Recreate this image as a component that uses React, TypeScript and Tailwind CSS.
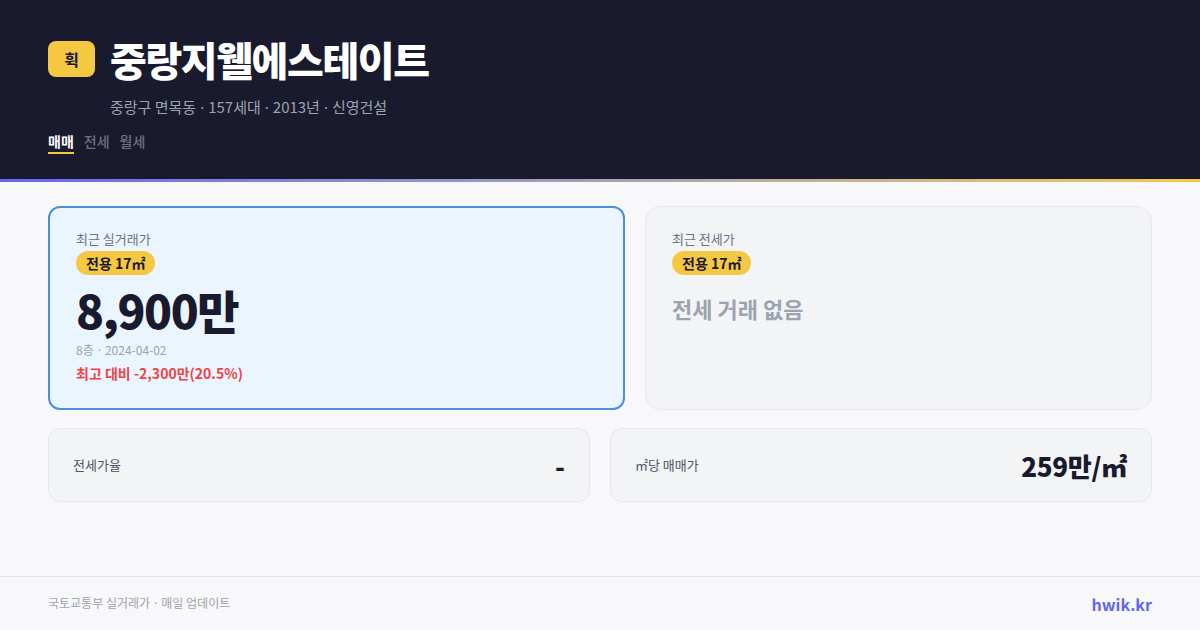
import React from "react";

const font = { fontFamily: '"Noto Sans CJK KR", "Noto Sans", sans-serif' };

function Dot() {
  return <span className="font-['Noto_Sans'] mx-[4px]">·</span>;
}

export default function App() {
  return (
    <div className="w-[1200px] h-[630px] bg-[#f8f8fa] flex flex-col overflow-hidden" style={font}>
      <header className="bg-[#1a1a2e] h-[179px] px-12 pt-[37px]">
        <div className="flex items-center gap-[15px]">
          <div className="w-[47px] h-[36px] rounded-lg bg-[#f5c842] flex items-center justify-center text-[16px] font-bold text-[#1a1a2e]">휙</div>
          <h1 className="text-[40px] leading-[44px] font-black text-white tracking-[-0.035em]">중랑지웰에스테이트</h1>
        </div>
        <div className="ml-[62px] mt-[16px] text-[15px] leading-[20px] text-[#9ca3af]">
          중랑구 면목동<Dot />157세대<Dot />2013년<Dot />신영건설
        </div>
        <div className="flex gap-[10px] mt-[15px]">
          <div className="flex flex-col items-center">
            <span className="text-[14px] leading-[18px] font-bold text-white">매매</span>
            <span className="mt-[2px] h-[2px] w-full bg-[#f5c842]" />
          </div>
          <span className="text-[14px] leading-[18px] text-[#6b7280] font-medium">전세</span>
          <span className="text-[14px] leading-[18px] text-[#6b7280] font-medium">월세</span>
        </div>
      </header>
      <div className="h-[3px] bg-gradient-to-r from-[#6366f1] to-[#f5c842]" />
      <main className="flex-1 px-12 pt-[24px]">
        <div className="flex gap-[20px] h-[204px]">
          <div className="w-[577px] rounded-[12px] border-2 border-[#4a90d9] bg-[#ebf5ff] px-[26px] pt-[22px]">
            <div className="text-[13px] leading-[18px] text-[#6b7280]">최근 실거래가</div>
            <div className="mt-[3px] inline-flex items-center h-[24px] px-[10px] rounded-full bg-[#f5c842] text-[14px] font-bold text-[#1a1a2e]">전용 17㎡</div>
            <div className="mt-[10px] text-[46px] leading-[48px] font-black text-[#1a1a2e] tracking-[-0.03em]">8,900만</div>
            <div className="mt-[9px] text-[12px] leading-[16px] text-[#9ca3af]">
              8층<Dot />2024-04-02
            </div>
            <div className="mt-[4px] text-[14px] leading-[20px] font-bold text-[#ef4444]">최고 대비 -2,300만(20.5%)</div>
          </div>
          <div className="flex-1 rounded-[16px] border border-[#e5e7eb] bg-[#f3f4f6] px-[26px] pt-[23px]">
            <div className="text-[13px] leading-[18px] text-[#6b7280]">최근 전세가</div>
            <div className="mt-[3px] inline-flex items-center h-[24px] px-[10px] rounded-full bg-[#f5c842] text-[14px] font-bold text-[#1a1a2e]">전용 17㎡</div>
            <div className="mt-[18px] text-[22px] leading-[30px] font-bold text-[#9ca3af]">전세 거래 없음</div>
          </div>
        </div>
        <div className="flex gap-[20px] mt-[18px] h-[74px]">
          <div className="flex-1 rounded-[12px] border border-[#e5e7eb] bg-[#f3f4f6] flex items-center justify-between px-[24px]">
            <span className="text-[13px] text-[#4b5563]">전세가율</span>
            <span className="text-[26px] font-black text-[#1a1a2e]">-</span>
          </div>
          <div className="flex-1 rounded-[12px] border border-[#e5e7eb] bg-[#f3f4f6] flex items-center justify-between px-[24px]">
            <span className="text-[13px] text-[#4b5563]">㎡당 매매가</span>
            <span className="text-[26px] font-black text-[#1a1a2e] tracking-[-0.01em]">259만/㎡</span>
          </div>
        </div>
      </main>
      <footer className="h-[54px] border-t border-[#e5e7eb] px-12 flex items-center justify-between">
        <span className="text-[12px] text-[#9ca3af]">국토교통부 실거래가<Dot />매일 업데이트</span>
        <span className="text-[16px] font-bold text-[#6366f1]">hwik.kr</span>
      </footer>
    </div>
  );
}
